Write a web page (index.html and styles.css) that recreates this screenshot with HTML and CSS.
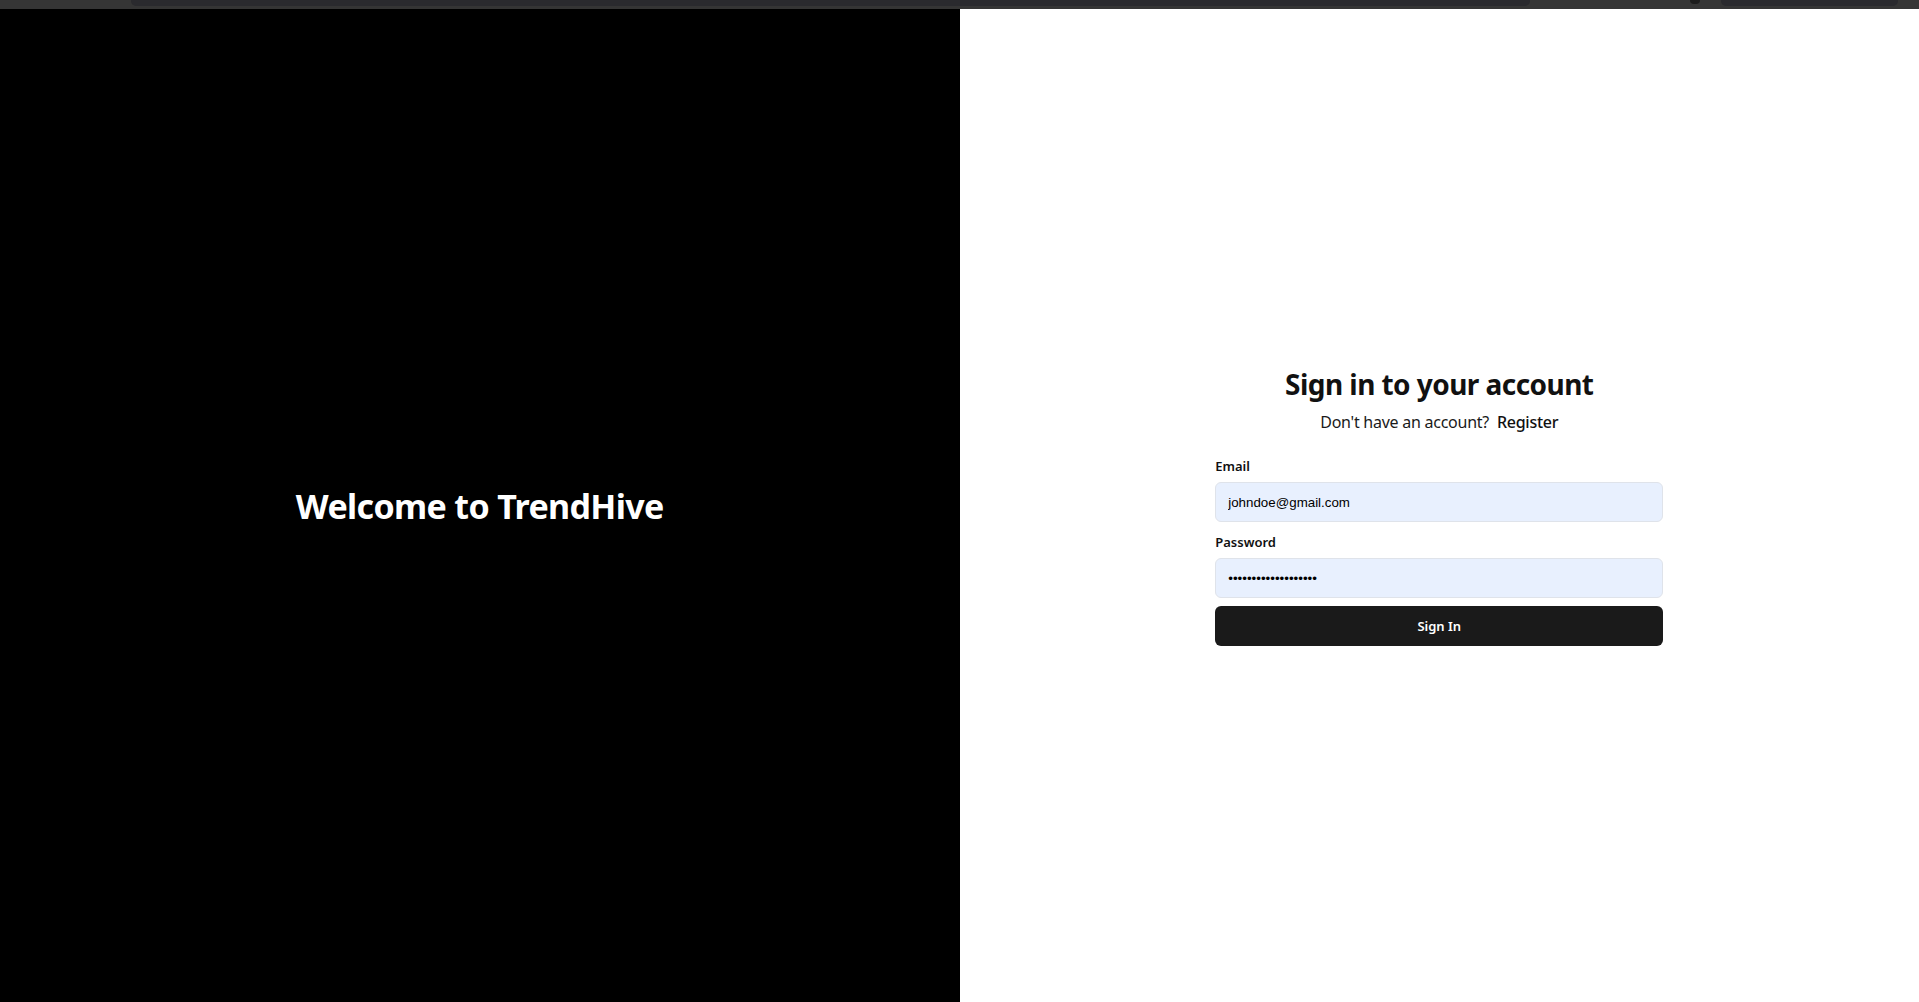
FILE: index.html
```html
<!DOCTYPE html>
<html lang="en">
<head>
<meta charset="utf-8">
<title>TrendHive - Sign in</title>
<link rel="stylesheet" href="styles.css">
</head>
<body>
<div class="chrome">
  <div class="chrome-url"></div>
  <div class="chrome-dot"></div>
  <div class="chrome-ext"></div>
</div>
<main class="split">
  <section class="brand">
    <h1 class="brand-title">Welcome to TrendHive</h1>
  </section>
  <section class="auth">
    <div class="auth-box">
      <h2 class="auth-title">Sign in to your account</h2>
      <p class="auth-sub">Don't have an account?&nbsp; <a class="auth-link" href="#">Register</a></p>
      <form class="form">
        <label class="label" for="email">Email</label>
        <input class="input" id="email" type="email" value="johndoe@gmail.com">
        <label class="label label-gap" for="password">Password</label>
        <input class="input" id="password" type="password" value="johndoe@gmail.com12">
        <button class="btn" type="button">Sign In</button>
      </form>
    </div>
  </section>
</main>
</body>
</html>
```

FILE: styles.css
```css
* { box-sizing: border-box; }
html, body { margin: 0; padding: 0; }
body {
  font-family: "Noto Sans", "Open Sans", sans-serif;
  background: #ffffff;
  height: 1002px;
  overflow: hidden;
}
.chrome {
  height: 9px;
  background: #353535;
  display: flex;
  align-items: flex-start;
  padding-left: 131px;
}
.chrome-url {
  width: 1399px;
  height: 6px;
  background: #2a2a2e;
  border-radius: 0 0 5px 5px;
}
.chrome-dot {
  width: 10px;
  height: 4px;
  margin-left: 160px;
  background: #1c1c1c;
  border-radius: 0 0 5px 5px;
}
.chrome-ext {
  width: 177px;
  height: 6px;
  margin-left: 21px;
  background: #2a2a2e;
  border-radius: 0 0 5px 5px;
}
.split {
  display: grid;
  grid-template-columns: 1fr 1fr;
  height: 993px;
}
.brand {
  background: #000000;
  display: flex;
  align-items: center;
  justify-content: center;
}
.brand-title {
  margin: 0;
  color: #ffffff;
  font-size: 34px;
  line-height: 40px;
  font-weight: 700;
  letter-spacing: -0.65px;
}
.auth {
  display: flex;
  align-items: center;
  justify-content: center;
  background: #ffffff;
  padding-top: 1px;
}
.auth-box {
  width: 448px;
  display: flex;
  flex-direction: column;
}
.auth-title {
  margin: 0;
  text-align: center;
  font-size: 28px;
  line-height: 36px;
  font-weight: 700;
  color: #111111;
  letter-spacing: -0.55px;
}
.auth-sub {
  margin: 8px 0 0;
  text-align: center;
  font-size: 16px;
  line-height: 24px;
  color: #1a1a1a;
  letter-spacing: -0.25px;
}
.auth-link {
  color: #111111;
  font-weight: 500;
  text-decoration: none;
}
.form {
  margin-top: 22px;
  display: flex;
  flex-direction: column;
}
.label {
  font-size: 13px;
  line-height: 20px;
  font-weight: 600;
  color: #111111;
  margin-bottom: 6px;
}
.label-gap { margin-top: 10px; }
.input {
  height: 40px;
  width: 100%;
  border: 1px solid #dfe3ea;
  border-radius: 6px;
  background: #e8f0fe;
  padding: 0 12px;
  font-family: "Liberation Sans", Arial, sans-serif;
  font-size: 13.33px;
  color: #000000;
  outline: none;
}
.btn {
  margin-top: 8px;
  height: 40px;
  width: 100%;
  border: 0;
  border-radius: 6px;
  background: #1a1a1a;
  color: #ffffff;
  font-family: "Noto Sans", "Open Sans", sans-serif;
  font-size: 13px;
  font-weight: 600;
  cursor: pointer;
}
```
